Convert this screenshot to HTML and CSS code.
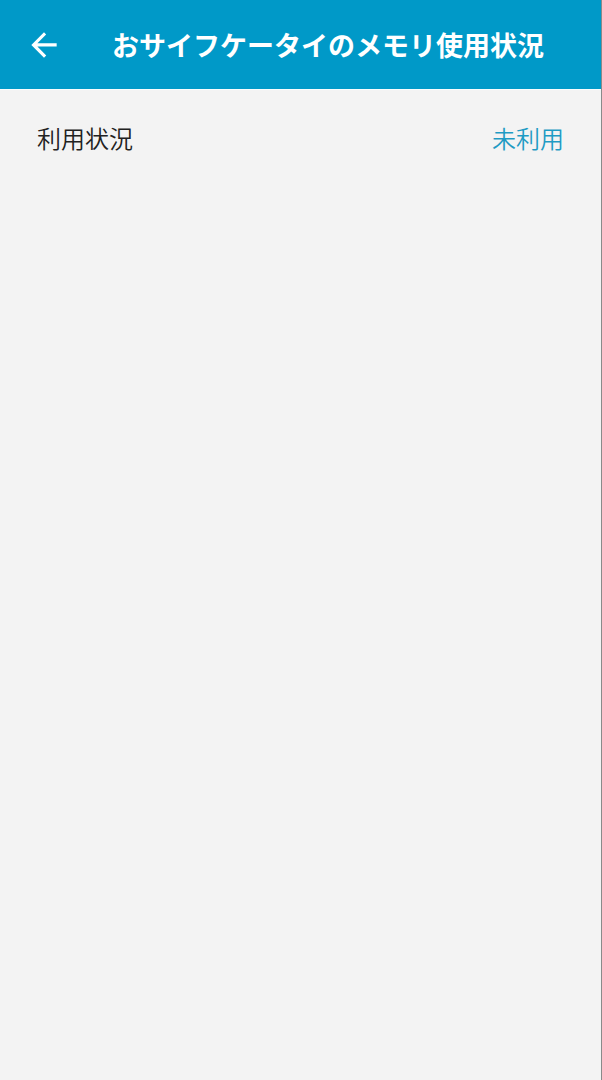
FILE: index.html
```html
<!DOCTYPE html>
<html lang="ja">
<head>
  <meta charset="UTF-8" />
  <meta name="viewport" content="width=device-width, initial-scale=1.0"/>
  <title>おサイフケータイのメモリ使用状況</title>
  <link rel="stylesheet" href="styles.css">
</head>
<body>

  <header class="toolbar">
    <button class="back" type="button" aria-label="戻る">
      <svg width="38" height="38" viewBox="0 0 24 24" fill="currentColor">
        <path d="M20 10.9H7.83l5.5-5.5L12 4l-8 8 8 8 1.41-1.41L7.83 13H20z"/>
      </svg>
    </button>
    <h1 class="title">おサイフケータイのメモリ使用状況</h1>
  </header>

  <main>
    <dl class="status">
      <dt>利用状況</dt>
      <dd>未利用</dd>
    </dl>
  </main>

</body>
</html>
```
FILE: styles.css
```css
* { box-sizing: border-box; }
body {
  margin: 0;
  min-height: 100vh;
  background: #f3f3f3;
  border-right: 1px solid #8a8a8a;
  color: #212121;
  font-family: "Noto Sans CJK JP", sans-serif;
}
.toolbar {
  display: flex;
  align-items: center;
  gap: 49px;
  height: 90px;
  padding: 0 25px;
  background: #0099c8;
  border-bottom: 1px solid #f8fdfe;
  color: #fff;
}
.back {
  display: flex;
  padding: 0;
  border: 0;
  background: none;
  color: inherit;
}
.title {
  margin: 0;
  font-size: 27px;
  font-weight: 700;
  line-height: 40px;
  white-space: nowrap;
}
.status {
  display: flex;
  justify-content: space-between;
  margin: 0;
  padding: 30px 37px;
  font-size: 24px;
  font-weight: 350;
  line-height: 36px;
}
.status dd {
  margin: 0;
  color: #1f9bc4;
}
```
